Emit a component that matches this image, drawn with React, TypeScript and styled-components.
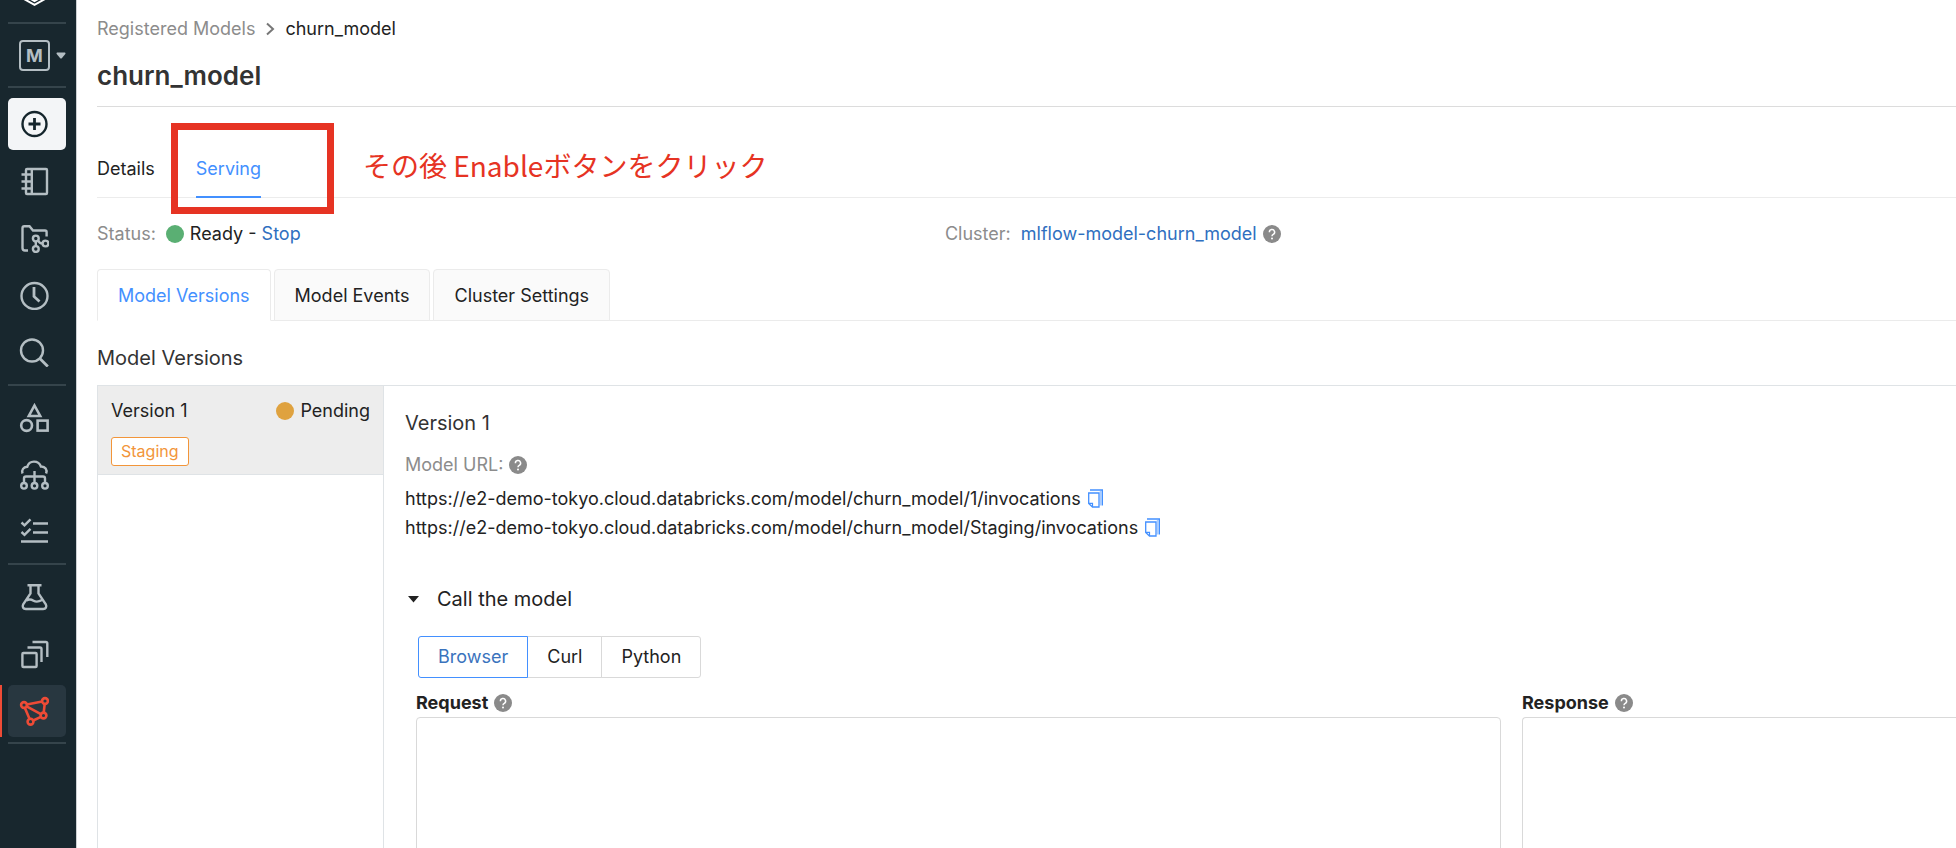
import React from 'react';
import styled, { createGlobalStyle, css } from 'styled-components';

const GlobalStyle = createGlobalStyle`
  *, *::before, *::after { box-sizing: border-box; }
  body {
    margin: 0;
    background: #fff;
    color: #222;
    font: 18px/26px Inter, "Noto Sans CJK JP", sans-serif;
  }
  h1, h2, h3, p, ul { margin: 0; padding: 0; }
  button, textarea { font: inherit; color: inherit; }
  a { color: #2f6fc0; text-decoration: none; }
`;

const Shell = styled.div`
  display: flex;
  height: 100vh;
  overflow: hidden;
`;

/* ---------- Sidebar ---------- */

const Sidebar = styled.nav`
  flex: none;
  width: 77px;
  display: flex;
  flex-direction: column;
  background: #18272e;
  border-right: 1px solid #ccd0d3;
`;

const LogoLink = styled.a`
  display: block;
  height: 22px;
  padding-left: 19px;
  svg { display: block; }
`;

const Divider = styled.hr`
  flex: none;
  width: 58px;
  height: 2px;
  margin: 0 0 0 8px;
  border: 0;
  background: #35444b;
`;

const Workspace = styled.button`
  display: flex;
  align-items: center;
  gap: 6px;
  height: 62px;
  padding: 0 0 0 19px;
  border: 0;
  background: none;
  color: #b4bec3;
`;

const Letter = styled.span`
  width: 31px;
  height: 31px;
  border: 2px solid #b4bec3;
  border-radius: 4px;
  font-size: 18px;
  line-height: 27px;
  font-weight: 700;
  text-align: center;
`;

const NavGroup = styled.div<{ $first?: boolean }>`
  display: flex;
  flex-direction: column;
  gap: 5px;
  padding: ${p => (p.$first ? '10px 0 6px' : '6px 0 5px')};
`;

const NavItem = styled.a<{ $tone?: 'light' | 'active' }>`
  display: flex;
  align-items: center;
  height: 52px;
  color: #b4bec3;
  &::before {
    content: "";
    width: 2px;
    height: 100%;
    margin-right: 6px;
    background: ${p => (p.$tone === 'active' ? '#ee4b36' : 'transparent')};
  }
  ${p => p.$tone === 'active' && css`color: #ee4b36;`}
  ${p => p.$tone === 'light' && css`color: #14252c;`}
`;

const Tile = styled.span<{ $tone?: 'light' | 'active' }>`
  display: flex;
  align-items: center;
  width: 58px;
  height: 52px;
  padding-left: 11px;
  border-radius: 5px;
  background: ${p => (p.$tone === 'light' ? '#f3f5f7' : p.$tone === 'active' ? '#283740' : 'transparent')};
`;

const Glyph = ({ children, w = 2.4 }: { children: React.ReactNode; w?: number }) => (
  <svg width="30" height="30" viewBox="0 0 30 30" fill="none" stroke="currentColor" strokeWidth={w} aria-hidden="true">
    {children}
  </svg>
);

type Item = { label: string; tone?: 'light' | 'active'; icon: React.ReactNode };

const groups: Item[][] = [
  [
    {
      label: 'Create', tone: 'light',
      icon: <Glyph><circle cx="15.5" cy="15" r="12" /><path d="M15.5 9v12M9.5 15h12" strokeWidth="2.8" /></Glyph>,
    },
    {
      label: 'Workspace',
      icon: <Glyph><rect x="7" y="3" width="21" height="25" rx="1" /><path d="M12.8 3v25M2.5 8.5h10M2.5 15.5h10M2.5 22.5h10" /></Glyph>,
    },
    {
      label: 'Repos',
      icon: (
        <Glyph>
          <path d="M9 27.5H6a2.5 2.5 0 0 1-2.5-2.5V5A1.800 1.800 0 0 1 5.300 3.200H10.500l3.500 4.300H26a1.600 1.600 0 0 1 1.600 1.600V13.500" />
          <circle cx="16.8" cy="15.5" r="2.9" /><circle cx="16.8" cy="26" r="2.9" /><circle cx="26.5" cy="20.5" r="2.9" />
          <path d="M16.800 18.500v5M19 17.500c1 2 2.200 3 4.500 3" />
        </Glyph>
      ),
    },
    { label: 'Recents', icon: <Glyph><circle cx="15.5" cy="16" r="13" /><path d="M15 7v9.500l5.500 5" strokeWidth="2.8" /></Glyph> },
    { label: 'Search', icon: <Glyph><circle cx="13" cy="13.5" r="11" /><path d="M20.800 21.500l8 8" strokeWidth="2.8" /></Glyph> },
  ],
  [
    { label: 'Data', icon: <Glyph w={2.6}><path d="M15.500 2.500l5.700 10.500h-11.400z" /><circle cx="7.6" cy="22.5" r="5.4" /><rect x="18.6" y="17.6" width="10" height="10" /></Glyph> },
    {
      label: 'Compute',
      icon: (
        <Glyph>
          <path d="M3.500 13.500c-1.200-3.500 1-6.500 4.700-6.700C9.300 3 12 1.600 15 1.600c3.300 0 5.800 1.700 6.900 4.900 4.300-.2 6.700 3.200 5.200 7" />
          <path d="M15.500 11v12M5 23v-4.500a2 2 0 0 1 2-2h17a2 2 0 0 1 2 2V23" />
          <circle cx="5" cy="25.8" r="2.8" /><circle cx="15.5" cy="25.8" r="2.8" /><circle cx="26" cy="25.8" r="2.8" />
        </Glyph>
      ),
    },
    { label: 'Jobs', icon: <Glyph><path d="M2.500 5.500l3 2.800 6-6M2.500 15l3 2.800 6-6M14 6.500h15M14 15.500h15M2 24.500h27" /></Glyph> },
  ],
  [
    {
      label: 'Experiments',
      icon: <Glyph><path d="M8.500 3.200h14M11.500 3.200v8.300L4.200 22.300c-1.200 2.600 0 4.700 2.600 4.700h17.400c2.600 0 3.800-2.100 2.600-4.700L19.500 11.500V3.200M7.500 18.500c3-1.800 5-1 7 .2s5 1.300 8.500-.7" /></Glyph>,
    },
    {
      label: 'Feature Store',
      icon: <Glyph><rect x="3.4" y="14" width="14.2" height="14" rx="1" /><path d="M8.500 8.500h12.500a1.500 1.500 0 0 1 1.500 1.500V23M13.500 3h13.300a1.500 1.500 0 0 1 1.500 1.500V18" /></Glyph>,
    },
    {
      label: 'Models', tone: 'active',
      icon: (
        <Glyph w={2.6}>
          <circle cx="5" cy="9" r="2.9" /><circle cx="26" cy="5" r="2.9" /><circle cx="24.5" cy="19.5" r="2.9" /><circle cx="11.5" cy="25.7" r="2.9" />
          <path d="M7.900 8.500l15.200-3M7.600 10.400l14.300 7.700M5.800 11.800l4.800 11.200M25.700 7.900l-1 8.700M14.200 24.500l7.700-3.700" />
        </Glyph>
      ),
    },
  ],
];

/* ---------- Main ---------- */

const Main = styled.main`
  flex: 1;
  min-width: 0;
  display: flex;
  flex-direction: column;
  padding: 16px 0 0 20px;
`;

const Breadcrumb = styled.div`
  display: flex;
  align-items: center;
  gap: 10px;
  a { color: #8c8c8c; }
`;

const Title = styled.h1`
  padding: 17px 0 14px;
  border-bottom: 1px solid #dcdcdc;
  font-size: 26px;
  line-height: 33px;
  font-weight: 600;
  color: #333;
`;

const PageTabs = styled.div`
  position: relative;
  display: flex;
  gap: 41px;
  padding-top: 33px;
  border-bottom: 1px solid #ececec;
`;

const PageTab = styled.button<{ $on?: boolean }>`
  height: 58px;
  margin-bottom: -1px;
  padding: 2px 0 0;
  border: 0;
  border-bottom: 2px solid ${p => (p.$on ? '#4390ff' : 'transparent')};
  background: none;
  color: ${p => (p.$on ? '#4390ff' : '#222')};
`;

const Highlight = styled.div`
  position: absolute;
  left: 74px;
  top: 16px;
  width: 163px;
  height: 91px;
  border: 7px solid #e63323;
  pointer-events: none;
`;

const Note = styled.p`
  position: absolute;
  left: 266px;
  top: 38px;
  font: 28px/40px "Noto Sans CJK JP", sans-serif;
  color: #e63323;
  white-space: nowrap;
`;

const StatusRow = styled.div`
  display: grid;
  grid-template-columns: 26fr 31fr;
  padding: 23px 0 22px;
`;

const Inline = styled.div`
  display: flex;
  align-items: center;
  gap: 6px;
`;

const Muted = styled.span<{ $gap?: number }>`
  margin-right: ${p => p.$gap ?? 0}px;
  color: #8c8c8c;
`;

const Dot = styled.span<{ $color: string }>`
  width: 18px;
  height: 18px;
  border-radius: 50%;
  background: ${p => p.$color};
`;

const HelpIcon = () => (
  <svg width="18" height="18" viewBox="0 0 18 18" role="img" aria-label="Help">
    <circle cx="9" cy="9" r="9" fill="#8a8a8a" />
    <path d="M6.400 7.200a2.600 2.600 0 1 1 3.900 2.200c-.9.500-1.300.9-1.300 1.900" fill="none" stroke="#fff" strokeWidth="1.5" />
    <circle cx="9" cy="13.5" r="1" fill="#fff" />
  </svg>
);

const CardTabs = styled.div`
  display: flex;
  gap: 3px;
  border-bottom: 1px solid #ebebeb;
`;

const CardTab = styled.button<{ $on?: boolean }>`
  height: 52px;
  margin-bottom: -1px;
  padding: 2px 20px 0;
  border: 1px solid #ebebeb;
  border-bottom-color: ${p => (p.$on ? '#fff' : '#ebebeb')};
  border-radius: 4px 4px 0 0;
  background: ${p => (p.$on ? '#fff' : '#fafafa')};
  color: ${p => (p.$on ? '#4390ff' : '#222')};
`;

const SectionTitle = styled.h2`
  padding: 24px 0 13px;
  font-size: 20px;
  line-height: 27px;
  font-weight: 400;
  color: #333;
`;

const Panel = styled.section`
  flex: 1;
  display: flex;
  border-top: 1px solid #dfe3e6;
  border-left: 1px solid #dfe3e6;
`;

const VersionList = styled.aside`
  flex: none;
  width: 286px;
  border-right: 1px solid #dfe3e6;
`;

const VersionCard = styled.div`
  display: flex;
  flex-direction: column;
  align-items: flex-start;
  gap: 13px;
  padding: 12px 13px 8px;
  border-bottom: 1px solid #dfe3e6;
  background: #ededed;
`;

const VersionHead = styled.div`
  align-self: stretch;
  display: flex;
  justify-content: space-between;
`;

const Tag = styled.span`
  padding: 0 9px;
  border: 1px solid #f2953a;
  border-radius: 3px;
  background: #fff;
  font-size: 16px;
  line-height: 27px;
  color: #f2953a;
`;

const Detail = styled.div`
  flex: 1;
  min-width: 0;
  padding: 24px 0 0 21px;
`;

const DetailTitle = styled.h3`
  font-size: 20px;
  line-height: 27px;
  font-weight: 400;
  color: #333;
`;

const UrlBlock = styled.div`
  padding: 15px 0 43px;
`;

const UrlList = styled.ul`
  padding-top: 6px;
  list-style: none;
  line-height: 29px;
`;

const IconButton = styled.button`
  display: flex;
  padding: 0;
  border: 0;
  background: none;
`;

const CopyIcon = () => (
  <svg width="16" height="19" viewBox="0 0 16 19" fill="none" aria-hidden="true">
    <path d="M13.500 2v14.500" stroke="#a9ccff" strokeWidth="1.5" />
    <path d="M3 1h12.300v15.500" stroke="#4390ff" strokeWidth="1.4" />
    <path d="M1.700 4H12v14H5.500L1.700 14.500z" stroke="#4390ff" strokeWidth="1.3" />
    <path d="M2 14.300h3.500v3.500" stroke="#4390ff" strokeWidth="1.2" />
  </svg>
);

const Collapse = styled.button`
  display: flex;
  align-items: center;
  gap: 18px;
  padding: 0 0 0 3px;
  border: 0;
  background: none;
  font-size: 20px;
  line-height: 28px;
`;

const Segments = styled.div`
  display: flex;
  margin: 23px 0 12px 13px;
`;

const Segment = styled.button<{ $on?: boolean }>`
  position: relative;
  z-index: ${p => (p.$on ? 1 : 0)};
  height: 42px;
  padding: 0 19px;
  margin-left: -1px;
  border: 1px solid ${p => (p.$on ? '#4390ff' : '#d9d9d9')};
  background: #fff;
  color: ${p => (p.$on ? '#3a73bd' : '#222')};
  &:first-child { margin-left: 0; border-radius: 3px 0 0 3px; }
  &:last-child { border-radius: 0 3px 3px 0; }
`;

const Payloads = styled.div`
  display: grid;
  grid-template-columns: 5fr 2fr;
  gap: 21px;
  padding-left: 11px;
`;

const FieldLabel = styled.label`
  font-weight: 700;
`;

const Payload = styled.textarea<{ $open?: boolean }>`
  display: block;
  width: 100%;
  height: 240px;
  margin-top: 1px;
  padding: 6px 14px;
  border: 1px solid #d9d9d9;
  border-radius: 4px;
  resize: none;
  outline: none;
  ${p => p.$open && css`border-right: 0; border-radius: 4px 0 0 4px;`}
`;

const urls = [
  'https://e2-demo-tokyo.cloud.databricks.com/model/churn_model/1/invocations',
  'https://e2-demo-tokyo.cloud.databricks.com/model/churn_model/Staging/invocations',
];

export default function App() {
  return (
    <Shell>
      <GlobalStyle />
      <Sidebar>
        <LogoLink href="#" aria-label="Home">
          <svg width="30" height="8" viewBox="0 0 30 8" fill="none" stroke="#fff" strokeWidth="2" aria-hidden="true">
            <path d="M5 -1L15.500 4.800 26 -1M10 -2L15.500 1 21 -2" />
          </svg>
        </LogoLink>
        <Divider />
        <Workspace aria-label="Machine Learning">
          <Letter>M</Letter>
          <svg width="10" height="7" viewBox="0 0 10 7" fill="currentColor" aria-hidden="true"><path d="M1 .5h8q1 .5.300 1.500L6 6q-1 1-2 0L.700 2Q0 1 1 .5z" /></svg>
        </Workspace>
        <Divider />
        {groups.map((items, i) => (
          <React.Fragment key={i}>
            <NavGroup $first={i === 0}>
              {items.map(it => (
                <NavItem key={it.label} href="#" aria-label={it.label} $tone={it.tone}>
                  <Tile $tone={it.tone}>{it.icon}</Tile>
                </NavItem>
              ))}
            </NavGroup>
            <Divider />
          </React.Fragment>
        ))}
      </Sidebar>

      <Main>
        <Breadcrumb>
          <a href="#">Registered Models</a>
          <svg width="10" height="14" viewBox="0 0 10 14" fill="none" stroke="#777" strokeWidth="2" aria-hidden="true"><path d="M2 1.500L8 7l-6 5.500" /></svg>
          <span>churn_model</span>
        </Breadcrumb>
        <Title>churn_model</Title>

        <PageTabs>
          <PageTab>Details</PageTab>
          <PageTab $on>Serving</PageTab>
          <Highlight />
          <Note>その後 Enableボタンをクリック</Note>
        </PageTabs>

        <StatusRow>
          <Inline>
            <Muted $gap={4}>Status:</Muted>
            <Dot $color="#5aaf73" />
            <span>Ready - <a href="#">Stop</a></span>
          </Inline>
          <Inline>
            <Muted $gap={4}>Cluster:</Muted>
            <a href="#">mlflow-model-churn_model</a>
            <HelpIcon />
          </Inline>
        </StatusRow>

        <CardTabs>
          <CardTab $on>Model Versions</CardTab>
          <CardTab>Model Events</CardTab>
          <CardTab>Cluster Settings</CardTab>
        </CardTabs>

        <SectionTitle>Model Versions</SectionTitle>

        <Panel>
          <VersionList>
            <VersionCard>
              <VersionHead>
                <span>Version 1</span>
                <Inline><Dot $color="#dfa23f" /><span>Pending</span></Inline>
              </VersionHead>
              <Tag>Staging</Tag>
            </VersionCard>
          </VersionList>

          <Detail>
            <DetailTitle>Version 1</DetailTitle>
            <UrlBlock>
              <Inline><Muted>Model URL:</Muted><HelpIcon /></Inline>
              <UrlList>
                {urls.map(u => (
                  <li key={u}>
                    <Inline>
                      <span>{u}</span>
                      <IconButton aria-label="Copy URL"><CopyIcon /></IconButton>
                    </Inline>
                  </li>
                ))}
              </UrlList>
            </UrlBlock>
            <Collapse aria-expanded="true">
              <svg width="11" height="7" viewBox="0 0 11 7" fill="#222" aria-hidden="true"><path d="M0 0h11L5.500 6.500z" /></svg>
              <span>Call the model</span>
            </Collapse>
            <Segments>
              <Segment $on>Browser</Segment>
              <Segment>Curl</Segment>
              <Segment>Python</Segment>
            </Segments>
            <Payloads>
              <div>
                <Inline><FieldLabel htmlFor="request">Request</FieldLabel><HelpIcon /></Inline>
                <Payload id="request" />
              </div>
              <div>
                <Inline><FieldLabel htmlFor="response">Response</FieldLabel><HelpIcon /></Inline>
                <Payload id="response" $open />
              </div>
            </Payloads>
          </Detail>
        </Panel>
      </Main>
    </Shell>
  );
}
